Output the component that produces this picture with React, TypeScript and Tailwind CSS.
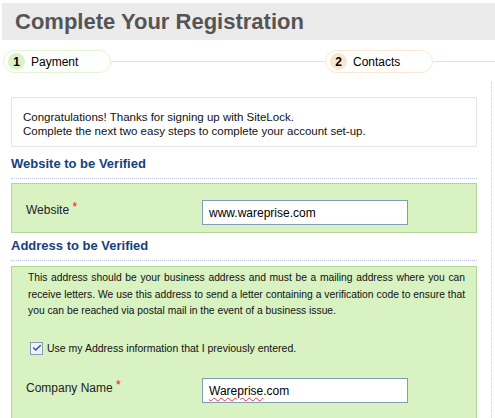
import { Check } from "lucide-react";

const FONT = "font-['Liberation_Sans',Arial,sans-serif]";

function Step({ n, label, done }: { n: number; label: string; done?: boolean }) {
	return (
		<div
			className={`flex h-[23px] w-[108px] shrink-0 items-center rounded-full border pl-[4px] ${
				done ? "border-[#e3f5d4]" : "border-[#fbe9d2]"
			}`}
		>
			<span
				className={`flex h-[17px] w-[17px] items-center justify-center rounded-full text-[12px] font-bold text-black ${
					done ? "bg-[#d9f3c6]" : "bg-[#f6e8d0]"
				}`}
			>
				{n}
			</span>
			<span className="ml-[6px] text-[12px] text-black">{label}</span>
		</div>
	);
}

function SectionTitle({ children }: { children: string }) {
	return (
		<h2 className="border-b border-dotted border-[#b7c9e2] pb-[6px] text-[13px] font-bold leading-[16px] text-[#173f7c]">
			{children}
		</h2>
	);
}

function Field({ label, children }: { label: string; children: React.ReactNode }) {
	return (
		<div className="flex items-start">
			<span className="mt-[1px] w-[176px] shrink-0 text-[12px] text-[#222]">
				{label} <span className="relative -top-[3px] text-[#e11]">*</span>
			</span>
			<div className="flex h-[25px] w-[206px] items-center border border-[#7f9db9] bg-white px-[6px] text-[12px] text-black">
				{children}
			</div>
		</div>
	);
}

export default function App() {
	return (
		<div className={`h-[418px] w-[495px] overflow-hidden bg-white ${FONT}`}>
			<div className="ml-[2px] mt-[3px] flex h-[37px] items-center bg-[#ebebeb] pl-[13px]">
				<h1 className="text-[22px] font-bold text-[#555]">Complete Your Registration</h1>
			</div>

			<div className="mt-[10px] flex items-center pl-[3px]">
				<Step n={1} label="Payment" done />
				<div className="h-px w-[214px] shrink-0 bg-[#e2e2e2]" />
				<Step n={2} label="Contacts" />
				<div className="h-px flex-1 bg-[#e2e2e2]" />
			</div>

			<div className="mt-[9px] w-[492px] border-r border-dotted border-[#d0d0d0] pb-[40px] pl-[11px] pt-[15px]">
				<div className="w-[466px]">
					<div className="h-[50px] border border-[#e6e6e6] pl-[11px] pt-[12px] text-[11.5px] leading-[14px] text-[#111]">
						<p>Congratulations! Thanks for signing up with SiteLock.</p>
						<p>Complete the next two easy steps to complete your account set-up.</p>
					</div>

					<div className="mt-[9px]">
						<SectionTitle>Website to be Verified</SectionTitle>
					</div>
					<div className="mt-[4px] h-[50px] border border-[#b3d597] bg-[#d8f2c2] pl-[14px] pt-[16px]">
						<Field label="Website">www.wareprise.com</Field>
					</div>

					<div className="mt-[5px]">
						<SectionTitle>Address to be Verified</SectionTitle>
					</div>
					<div className="mt-[5px] h-[160px] border border-[#b3d597] bg-[#d8f2c2] pl-[14px] pr-[11px] pt-[3px]">
						<p className="pl-[2px] text-justify text-[10.3px] leading-[16.5px] text-[#111]">
							This address should be your business address and must be a mailing address where you can
							receive letters. We use this address to send a letter containing a verification code to
							ensure that you can be reached via postal mail in the event of a business issue.
						</p>
						<label className="ml-[4px] mt-[21px] flex items-center text-[10.5px] text-[#111]">
							<span className="flex h-[13px] w-[13px] items-center justify-center border border-[#8c9bb4] bg-[#eef1f8]">
								<Check className="h-[10px] w-[10px] text-[#3a4fa0]" strokeWidth={3.5} />
							</span>
							<span className="ml-[4px]">Use my Address information that I previously entered.</span>
						</label>
						<div className="mt-[22px]">
							<Field label="Company Name">
								<span className="underline decoration-[#e33] decoration-wavy decoration-1 underline-offset-2">
									Wareprise
								</span>
								.com
							</Field>
						</div>
					</div>
				</div>
			</div>
		</div>
	);
}
